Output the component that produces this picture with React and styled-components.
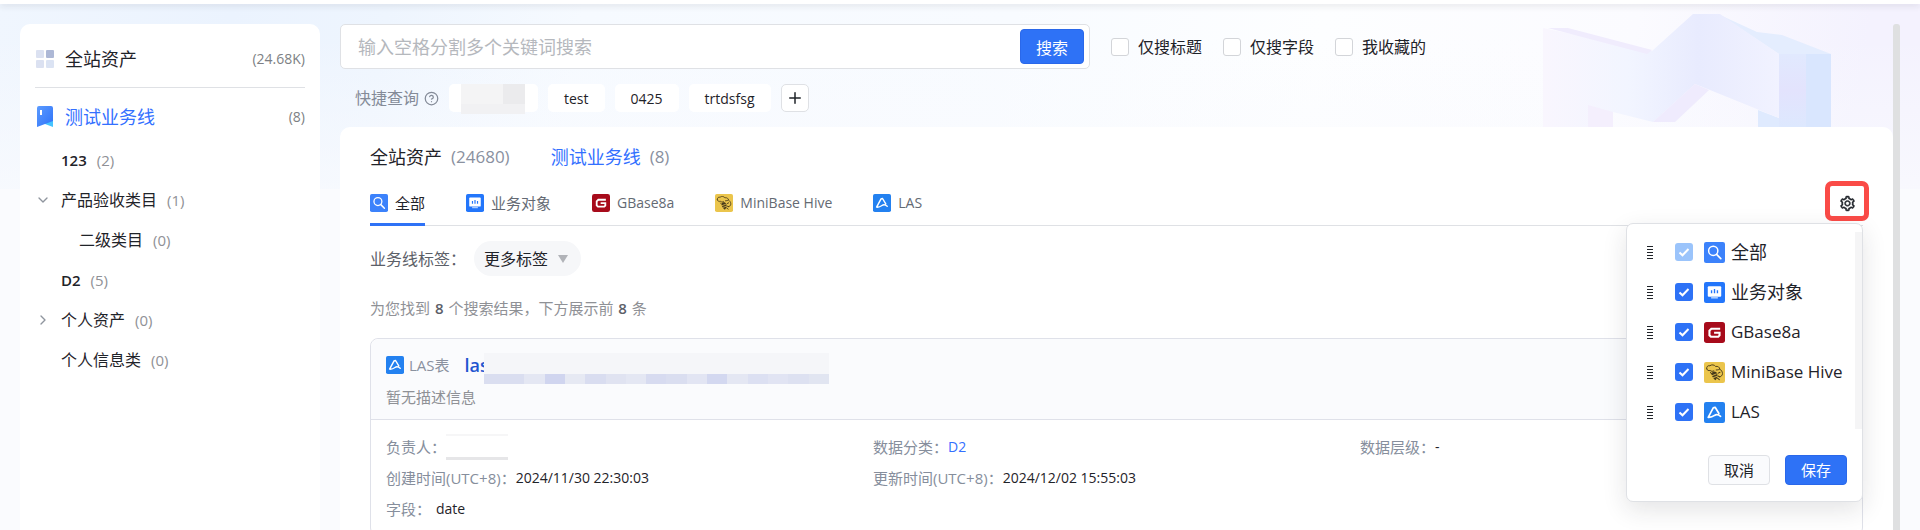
import React, { useState } from 'react';
import styled, { createGlobalStyle } from 'styled-components';
import { AiOutlineSetting } from 'react-icons/ai';
import { ChevronDown, ChevronRight, CircleHelp, Plus } from 'lucide-react';

const tree = [
    { name: '123', count: 2, bold: true },
    { name: '产品验收类目', count: 1, arrow: 'down' },
    { name: '二级类目', count: 0, level: 1 },
    { name: 'D2', count: 5, bold: true },
    { name: '个人资产', count: 0, arrow: 'right' },
    { name: '个人信息类', count: 0 },
];

const sources = [
    { id: 'all', name: '全部' },
    { id: 'biz', name: '业务对象' },
    { id: 'gbase', name: 'GBase8a', latin: true },
    { id: 'hive', name: 'MiniBase Hive', latin: true },
    { id: 'las', name: 'LAS', latin: true },
];

const searchOptions = ['仅搜标题', '仅搜字段', '我收藏的'];
const quickQueries = ['test', '0425', 'trtdsfsg'];
const nameMask = ['#dadef0', '#dadef0', '#e4e7f3', '#d0d5ef', '#e6e9f3', '#d9ddf0', '#e0e3f1', '#e4e7f3', '#d7dbf0', '#dadef0', '#e2e5f3', '#d3d8f0', '#e4e7f3', '#dce0f2', '#e1e4f3', '#dde1f1', '#e1e5f1'];

function SourceIcon({ id, size }) {
    return (
        <svg width={size} height={size} viewBox='0 0 20 20' aria-hidden='true'>
            {id === 'all' && (
                <>
                    <rect width='20' height='20' rx='2' fill='#3c82fb' />
                    <circle cx='8.8' cy='8.4' r='4.4' fill='none' stroke='#fff' strokeWidth='1.4' />
                    <path d='M12 11.8l4 4' stroke='#fff' strokeWidth='1.6' strokeLinecap='round' />
                </>
            )}
            {id === 'biz' && (
                <>
                    <rect width='20' height='20' rx='2' fill='#2376fb' />
                    <rect x='3.6' y='4' width='12.8' height='10' rx='1' fill='#fff' />
                    <path d='M6.8 14h6.4v1.8H6.8z' fill='#a9cbff' />
                    <path d='M7.2 7.8v3M10 6.6v4.2M12.8 7.8v3' stroke='#2376fb' strokeWidth='1.3' />
                </>
            )}
            {id === 'gbase' && (
                <>
                    <rect width='20' height='20' rx='2.6' fill='#a70b1b' />
                    <path
                        d='M15.4 6.4H7L5.2 8.2v4.4L6.6 14h7l1.2-1.2v-2.6H9.6'
                        fill='none'
                        stroke='#fff'
                        strokeWidth='2'
                    />
                </>
            )}
            {id === 'hive' && (
                <>
                    <rect width='20' height='20' rx='2' fill='#ebc54c' />
                    <path
                        d='M2.6 6.6c-.6-2 1.2-3.6 3-3 1.6-1.4 4.4-1 5.4.6 2.2-.4 4 .8 4 2.6 1.4.8 2.6 2.4 2.6 4.2 0 1.8-1.2 3-2.8 3M2.6 6.6c.4 1.4 2 2 3.2 1.4 1 1 2.6 1.2 3.6.4M11.6 7.6c1.4 0 2.8-.2 3.4-.8'
                        fill='none'
                        stroke='#46391a'
                        strokeWidth='.9'
                        strokeLinecap='round'
                    />
                    <path d='M8 9.6c1.6-1 4-.4 4.6 1.4.6 2-.2 4.8-1.6 6.4-1.8-1-3.4-3.2-3.6-5.2z' fill='#46391a' />
                    <path d='M7.2 13.2l5-2M8.2 15.2l4.2-1.6' stroke='#ebc54c' strokeWidth='.8' />
                    <path
                        d='M6.2 10l1.4 1.6M13.4 13.4l1.8.8M12.8 15.4l1.8 1.4M13.6 10.6l1.6-.8'
                        stroke='#46391a'
                        strokeWidth='1'
                        strokeLinecap='round'
                    />
                </>
            )}
            {id === 'las' && (
                <>
                    <rect width='20' height='20' rx='2' fill='#2381f0' />
                    <path
                        d='M14.2 11L10.6 5 8.8 5.6 4 14.6c2.4.2 4.4-.6 6-1.8 2-1.4 3.6-1 5.8.8'
                        fill='none'
                        stroke='#fff'
                        strokeWidth='1.6'
                        strokeLinecap='round'
                        strokeLinejoin='round'
                    />
                </>
            )}
        </svg>
    );
}

function HeroArt() {
    return (
        <Art viewBox='0 0 300 127' aria-hidden='true'>
            <defs>
                <linearGradient id='ribbon' x1='0' x2='1'>
                    <stop offset='0' stopColor='#f9f6fe' />
                    <stop offset='.36' stopColor='#f2f5ff' />
                    <stop offset='.66' stopColor='#e8ebfe' />
                    <stop offset='1' stopColor='#f1f2ff' />
                </linearGradient>
                <linearGradient id='block' x1='0' x2='0' y1='0' y2='1'>
                    <stop offset='0' stopColor='#e1e9fe' />
                    <stop offset='.5' stopColor='#e3e3fd' />
                    <stop offset='1' stopColor='#dde8fe' />
                </linearGradient>
            </defs>
            <path d='M180 15l37 17 25 3 49 19h-52z' fill='#e4edfe' />
            <path d='M239 54h27v73h-27z' fill='url(#block)' />
            <path d='M266 54h25v73h-25z' fill='#d9e6fe' />
            <path d='M218 110l21 8v9h-21z' fill='#dfeafe' />
            <path d='M3 28l109 23 41-37h27l59 40v64l-69-28-15-6-42 38-40-10v15H3z' fill='url(#ribbon)' />
            <path d='M8 28h20l84 22-5 4z' fill='#f0ecfd' />
            <path d='M48 105l25 7v15H48z' fill='#f4effd' />
            <path d='M155 84l14 6-34 32h-22z' fill='#efebfd' />
        </Art>
    );
}

export default function App() {
    const [checked, setChecked] = useState(['all', 'biz', 'gbase', 'hive', 'las']);
    const [active, setActive] = useState('all');

    const toggle = (id) => {
        setChecked(checked.includes(id) ? checked.filter((c) => c !== id) : [...checked, id]);
    };

    return (
        <Page>
            <GlobalStyle />
            <TopBar />
            <Hero>
                <HeroArt />
            </Hero>
            <Layout>
                <Sidebar>
                    <SideHead>
                        <svg width='18' height='18' viewBox='0 0 18 18' aria-hidden='true'>
                            <rect width='8' height='8' rx='1' fill='#dbe1f1' />
                            <rect x='10' width='8' height='8' rx='1' fill='#adb8d6' />
                            <rect y='10' width='8' height='8' rx='1' fill='#dbe1f1' />
                            <rect x='10' y='10' width='8' height='8' rx='1' fill='#dbe3f3' />
                        </svg>
                        <SideTitle href='#all'>全站资产</SideTitle>
                        <Count>(24.68K)</Count>
                    </SideHead>
                    <SideLine>
                        <svg width='18' height='22' viewBox='0 0 18 22' aria-hidden='true'>
                            <defs>
                                <linearGradient id='book' x1='0' y1='0' x2='1' y2='1'>
                                    <stop offset='0' stopColor='#5b9bff' />
                                    <stop offset='1' stopColor='#2f72f8' />
                                </linearGradient>
                            </defs>
                            <path d='M3 0h12a2 2 0 0 1 2 2v16L9 18l-8 3V2a2 2 0 0 1 2-2z' fill='url(#book)' />
                            <path d='M9 18l8-3v6z' fill='#46c4ff' />
                            <path d='M4 4h2v5H4z' fill='#fff' />
                        </svg>
                        <SideTitle href='#line' $blue>测试业务线</SideTitle>
                        <Count>(8)</Count>
                    </SideLine>
                    <Tree>
                        {tree.map((node) => (
                            <TreeItem key={node.name} $level={node.level}>
                                <Arrow>
                                    {node.arrow === 'down' && <ChevronDown size={16} strokeWidth={2} />}
                                    {node.arrow === 'right' && <ChevronRight size={16} strokeWidth={2} />}
                                </Arrow>
                                <TreeName $bold={node.bold}>{node.name}</TreeName>
                                <TreeCount>({node.count})</TreeCount>
                            </TreeItem>
                        ))}
                    </Tree>
                </Sidebar>

                <Main>
                    <SearchRow>
                        <SearchBox>
                            <SearchInput placeholder='输入空格分割多个关键词搜索' aria-label='搜索' />
                            <SearchButton>搜索</SearchButton>
                        </SearchBox>
                        {searchOptions.map((text) => (
                            <Option key={text}>
                                <CheckBox type='checkbox' />
                                {text}
                            </Option>
                        ))}
                    </SearchRow>

                    <QuickRow>
                        <QuickLabel>
                            快捷查询
                            <CircleHelp size={15} strokeWidth={2} />
                        </QuickLabel>
                        <MaskChip aria-label='快捷查询'>
                            <ChipMask />
                        </MaskChip>
                        {quickQueries.map((text) => (
                            <Chip key={text}>{text}</Chip>
                        ))}
                        <AddButton aria-label='新增'>
                            <Plus size={18} strokeWidth={2} />
                        </AddButton>
                    </QuickRow>

                    <Panel>
                        <Scopes>
                            <Scope href='#all'>
                                全站资产 <ScopeCount>(24680)</ScopeCount>
                            </Scope>
                            <Scope href='#line' $blue>
                                测试业务线 <ScopeCount>(8)</ScopeCount>
                            </Scope>
                        </Scopes>

                        <TabBar>
                            {sources.map((s) => (
                                <Tab key={s.id} $active={active === s.id} $latin={s.latin} onClick={() => setActive(s.id)}>
                                    <SourceIcon id={s.id} size={18} />
                                    {s.name}
                                </Tab>
                            ))}
                            <Settings>
                                <GearButton aria-label='设置'>
                                    <AiOutlineSetting size={17} strokeWidth={30} />
                                </GearButton>
                                <Highlight />
                                <Popup>
                                    <PopupList>
                                        {sources.map((s) => (
                                            <li key={s.id}>
                                                <PopupItem $latin={s.latin}>
                                                    <Grip>
                                                        <i /><i /><i /><i /><i />
                                                    </Grip>
                                                    <CheckBox
                                                        type='checkbox'
                                                        checked={checked.includes(s.id)}
                                                        disabled={s.id === 'all'}
                                                        onChange={() => toggle(s.id)}
                                                    />
                                                    <SourceIcon id={s.id} size={21} />
                                                    <span>{s.name}</span>
                                                </PopupItem>
                                            </li>
                                        ))}
                                    </PopupList>
                                    <PopupFoot>
                                        <FootButton>取消</FootButton>
                                        <FootButton $primary>保存</FootButton>
                                    </PopupFoot>
                                </Popup>
                            </Settings>
                        </TabBar>

                        <FilterRow>
                            <label htmlFor='tags'>业务线标签：</label>
                            <SelectWrap>
                                <TagSelect id='tags'>
                                    <option>更多标签</option>
                                </TagSelect>
                                <Caret />
                            </SelectWrap>
                        </FilterRow>

                        <Summary>
                            为您找到 <b>8</b> 个搜索结果，下方展示前 <b>8</b> 条
                        </Summary>

                        <Card>
                            <CardHead>
                                <CardTitle>
                                    <SourceIcon id='las' size={18} />
                                    <Kind>LAS表</Kind>
                                    <Name href='#las'>las</Name>
                                    <NameMask>
                                        {nameMask.map((color, i) => (
                                            <i key={i} style={{ borderBottomColor: color }} />
                                        ))}
                                    </NameMask>
                                </CardTitle>
                                <Description>暂无描述信息</Description>
                            </CardHead>
                            <Fields>
                                <Field>
                                    <dt>负责人：</dt>
                                    <dd><OwnerMask /></dd>
                                </Field>
                                <Field>
                                    <dt>数据分类：</dt>
                                    <dd><a href='#d2'>D2</a></dd>
                                </Field>
                                <Field>
                                    <dt>数据层级：</dt>
                                    <dd>-</dd>
                                </Field>
                                <Field>
                                    <dt>创建时间(UTC+8)：</dt>
                                    <dd>2024/11/30 22:30:03</dd>
                                </Field>
                                <Field $wide>
                                    <dt>更新时间(UTC+8)：</dt>
                                    <dd>2024/12/02 15:55:03</dd>
                                </Field>
                                <Field $gap>
                                    <dt>字段：</dt>
                                    <dd>date</dd>
                                </Field>
                            </Fields>
                        </Card>
                    </Panel>
                </Main>
                <ScrollThumb />
            </Layout>
        </Page>
    );
}

const GlobalStyle = createGlobalStyle`
 * {
    box-sizing: border-box;
 }

 body {
    margin: 0;
    color: #1f2329;
    font-family: "Open Sans", "Noto Sans CJK SC", sans-serif;
    font-size: 15px;
    line-height: 20px;
 }

 button, input, select {
    font-family: inherit;
 }

 a {
    text-decoration: none;
 }
`;

const Page = styled.div`
 position: relative;
 height: 100vh;
 overflow: hidden;
 display: flex;
 flex-direction: column;
 background: #fafbfe;
`;

const TopBar = styled.header`
 flex: none;
 position: relative;
 z-index: 1;
 height: 4px;
 background: #fff;
 box-shadow: 0 2px 6px rgba(31, 35, 41, 0.12);
`;

// artwork behind the search area
const Hero = styled.div`
 position: absolute;
 top: 0;
 left: 0;
 right: 0;
 height: 189px;
 background:
    linear-gradient(180deg, rgba(250, 251, 254, 0) 20%, rgba(250, 251, 254, 0.7) 100%),
    linear-gradient(100deg, #f0f6fe 0%, #ebf3fe 12%, #eef5fe 20%, #f6faff 30%, #f8fbff 52%, #fdfeff 68%, #fbfbff 84%, #f4f2fe 96%);
`;

const Art = styled.svg`
 position: absolute;
 top: 0;
 right: 80px;
 width: 300px;
 height: 127px;
`;

const Layout = styled.div`
 position: relative;
 flex: 1;
 min-height: 0;
 display: flex;
 padding: 20px 20px 0;
`;

const Sidebar = styled.aside`
 flex: none;
 width: 300px;
 padding: 7px 15px 0;
 margin-right: 20px;
 background: #fff;
 border-radius: 10px 10px 0 0;
`;

const SideHead = styled.div`
 display: flex;
 align-items: center;
 height: 57px;
 padding-left: 1px;
 border-bottom: 1px solid #dfe1e5;
`;

const SideLine = styled(SideHead)`
 height: 52px;
 padding-top: 6px;
 border-bottom: 0;
`;

const SideTitle = styled.a`
 flex: 1;
 margin-left: 11px;
 font-size: 18px;
 color: ${({ $blue }) => ($blue ? '#3370ff' : '#1f2329')};
`;

const Count = styled.span`
 font-size: 14px;
 color: #7d7f84;
`;

const Tree = styled.ul`
 margin: 0;
 padding: 0;
 list-style: none;
`;

const TreeItem = styled.li`
 display: flex;
 align-items: center;
 height: 40px;
 padding-left: ${({ $level }) => ($level ? '18px' : '0')};
`;

const Arrow = styled.span`
 display: flex;
 width: 26px;
 color: #8f959e;
`;

const TreeName = styled.span`
 font-size: ${({ $bold }) => ($bold ? '15px' : '16px')};
 font-weight: ${({ $bold }) => ($bold ? 600 : 400)};
`;

const TreeCount = styled.span`
 margin-left: 10px;
 font-size: 15px;
 color: #8f9196;
`;

const Main = styled.main`
 flex: 1;
 min-width: 0;
 display: flex;
 flex-direction: column;
`;

const SearchRow = styled.div`
 flex: none;
 display: flex;
 align-items: center;
 gap: 21px;
`;

const SearchBox = styled.div`
 flex: 0 1 750px;
 display: flex;
 align-items: center;
 height: 45px;
 padding: 0 5px 0 17px;
 background: #fff;
 border: 1px solid #dfe1e5;
 border-radius: 5px;
`;

const SearchInput = styled.input`
 flex: 1;
 min-width: 0;
 padding: 0;
 border: 0;
 outline: 0;
 font-size: 18px;

 &::placeholder{
    color: #b5b8bd;
 }
`;

const SearchButton = styled.button`
 width: 64px;
 height: 35px;
 padding: 0;
 border: 1px solid #2a68ea;
 border-radius: 4px;
 background: #2e72f6;
 color: #fff;
 font-size: 16px;
 cursor: pointer;
`;

const Option = styled.label`
 display: flex;
 align-items: center;
 gap: 9px;
 font-size: 16px;
`;

const CheckBox = styled.input`
 appearance: none;
 flex: none;
 width: 18px;
 height: 18px;
 margin: 0;
 border: 1px solid #d3d5d9;
 border-radius: 3px;
 background: #fff;

 &:checked{
    border: 0;
    background: #2e72f6 url("data:image/svg+xml,%3Csvg xmlns='http://www.w3.org/2000/svg' viewBox='0 0 18 18'%3E%3Cpath d='M4.5 9.5l3 2.8 6-6.3' fill='none' stroke='%23fff' stroke-width='2'/%3E%3C/svg%3E");
 }

 &:disabled{
    background-color: #9bc4fb;
 }
`;

const QuickRow = styled.div`
 flex: none;
 display: flex;
 align-items: center;
 gap: 10px;
 height: 28px;
 margin: 15px 0;
 padding-left: 15px;
`;

const QuickLabel = styled.span`
 display: flex;
 align-items: center;
 gap: 5px;
 font-size: 16px;
 color: #848b98;
`;

const Chip = styled.button`
 height: 28px;
 padding: 0 16px;
 border: 0;
 border-radius: 5px;
 background: #fff;
 color: #1f2329;
 font-size: 14px;
`;

const MaskChip = styled(Chip)`
 width: 89px;
 padding: 0 12px;
`;

const ChipMask = styled.span`
 display: block;
 width: 64px;
 height: 30px;
 background: linear-gradient(90deg, #f4f4f5 65%, #ebebed 65%);
 border-bottom: 10px solid #f1f1f3;
`;

const AddButton = styled.button`
 display: flex;
 align-items: center;
 justify-content: center;
 width: 28px;
 height: 28px;
 padding: 0;
 border: 1px solid #dfe1e5;
 border-radius: 5px;
 background: #fff;
 color: #1f2329;
`;

const Panel = styled.section`
 flex: none;
 padding: 20px 30px;
 background: #fff;
 border-radius: 10px;
`;

const Scopes = styled.nav`
 display: flex;
 gap: 41px;
`;

const Scope = styled.a`
 display: flex;
 align-items: center;
 gap: 9px;
 font-size: 18px;
 color: ${({ $blue }) => ($blue ? '#3370ff' : '#1f2329')};
`;

const ScopeCount = styled.span`
 font-size: 17px;
 color: #8a919f;
`;

const TabBar = styled.div`
 display: flex;
 gap: 41px;
 height: 45px;
 margin-top: 14px;
 border-bottom: 1px solid #dfe1e5;
`;

const Tab = styled.button`
 display: flex;
 align-items: center;
 gap: 7px;
 height: 45px;
 padding: 1px 0 0;
 border: 0;
 border-bottom: 3px solid ${({ $active }) => ($active ? '#2e72f6' : 'transparent')};
 background: none;
 color: ${({ $active }) => ($active ? '#1f2329' : '#646a73')};
 font-size: ${({ $latin }) => ($latin ? '14px' : '15px')};
`;

const Settings = styled.div`
 position: relative;
 display: flex;
 align-items: center;
 margin-left: auto;
 padding-right: 7px;
`;

const GearButton = styled.button`
 display: flex;
 padding: 0;
 border: 0;
 background: none;
 color: #1f2329;
`;

const Highlight = styled.span`
 position: absolute;
 top: 0;
 right: -6px;
 width: 44px;
 height: 40px;
 border: 5px solid #fa4b47;
 border-radius: 7px;
 pointer-events: none;
`;

const Popup = styled.div`
 position: absolute;
 top: 42px;
 right: 0;
 z-index: 2;
 width: 237px;
 padding: 8px 0 16px;
 background: #fff;
 border: 1px solid #dfe1e5;
 border-radius: 7px;
 box-shadow: 0 8px 24px rgba(31, 35, 41, 0.12);
`;

const PopupList = styled.ul`
 height: 197px;
 margin: 0;
 padding: 0;
 list-style: none;
 overflow: hidden;
 border-right: 7px solid #f5f5f6;
`;

const PopupItem = styled.label`
 display: flex;
 align-items: center;
 height: 40px;
 padding-left: 20px;
 font-size: ${({ $latin }) => ($latin ? '17px' : '18px')};

 svg{
    margin: 0 6px 0 11px;
 }
`;

const Grip = styled.span`
 display: grid;
 gap: 2px;
 width: 6px;
 margin-right: 22px;

 i{
    height: 1px;
    background: #1f2329;
 }
`;

const PopupFoot = styled.div`
 display: flex;
 justify-content: flex-end;
 gap: 15px;
 margin-top: 26px;
 padding-right: 15px;
`;

const FootButton = styled.button`
 width: 62px;
 height: 30px;
 padding: 0 0 2px;
 border: 1px solid ${({ $primary }) => ($primary ? '#2a68ea' : '#dfe1e5')};
 border-radius: 4px;
 background: ${({ $primary }) => ($primary ? '#2e72f6' : '#fafbfd')};
 color: ${({ $primary }) => ($primary ? '#fff' : '#1f2329')};
 font-size: 15px;
`;

const FilterRow = styled.div`
 display: flex;
 align-items: center;
 gap: 8px;
 margin-top: 15px;
 font-size: 16px;
 color: #5c6068;
`;

const SelectWrap = styled.span`
 display: flex;
 align-items: center;
 height: 35px;
 padding-right: 13px;
 border-radius: 18px;
 background: #f6f7f9;
`;

const TagSelect = styled.select`
 appearance: none;
 padding: 0 9px 0 10px;
 border: 0;
 background: none;
 color: #1f2329;
 font-size: 16px;
`;

const Caret = styled.span`
 border: 5px solid transparent;
 border-top: 8px solid #b1b3b8;
 border-bottom: 0;
`;

const Summary = styled.p`
 margin: 22px 0 20px;
 color: #8f9196;

 b{
    margin: 0 1px;
    font-weight: 600;
    color: #5c6068;
 }
`;

const Card = styled.article`
 border: 1px solid #dfe1e9;
 border-radius: 8px;
`;

const CardHead = styled.div`
 padding: 10px 15px 11px;
 border-bottom: 1px solid #dfe1e9;
 border-radius: 8px 8px 0 0;
 background: #fafbfd;
`;

const CardTitle = styled.div`
 display: flex;
 align-items: center;
 height: 32px;
`;

const Kind = styled.span`
 margin: 0 15px 0 5px;
 font-size: 15px;
 color: #8a919f;
`;

const Name = styled.a`
 font-size: 18px;
 font-weight: 600;
 color: #1f56d0;
`;

// covers the rest of the table name
const NameMask = styled.span`
 position: relative;
 display: flex;
 flex: 0 1 345px;
 margin: 6px 0 0 -5px;

 i{
    flex: 1;
    height: 31px;
    background: #f5f6f9;
    border-bottom: 10px solid;
 }
`;

const Description = styled.p`
 margin: 5px 0 0;
 line-height: 22px;
 color: #8f9196;
`;

const Fields = styled.dl`
 display: grid;
 grid-template-columns: repeat(3, 1fr);
 margin: 0;
 padding: 11px 15px;
`;

const Field = styled.div`
 display: flex;
 align-items: center;
 gap: ${({ $gap }) => ($gap ? '5px' : '0')};
 grid-column-end: ${({ $wide }) => ($wide ? 'span 2' : 'auto')};
 height: 31px;

 dt{
    color: #868e9c;
 }

 dd{
    margin: 0;
    font-size: 14px;
 }

 a{
    color: #3370ff;
 }
`;

const OwnerMask = styled.span`
 display: block;
 width: 62px;
 height: 26px;
 border-top: 2px solid #f6f6f7;
 border-bottom: 3px solid #e6e6e8;
`;

const ScrollThumb = styled.span`
 flex: none;
 width: 7px;
 background: #dfe0e1;
 border-radius: 3px 3px 0 0;
`;
